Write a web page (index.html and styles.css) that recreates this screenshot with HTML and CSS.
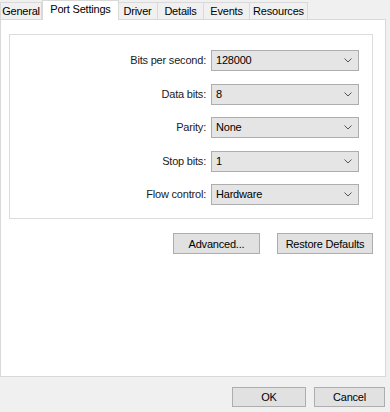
FILE: index.html
```html
<!DOCTYPE html>
<html lang="en">
<head>
<meta charset="UTF-8" />
<title>Port Settings</title>
<link rel="stylesheet" href="styles.css">
</head>
<body>

<div class="tabs">
  <div class="tab t-general">General</div>
  <div class="tab active t-port">Port Settings</div>
  <div class="tab t-driver">Driver</div>
  <div class="tab t-details">Details</div>
  <div class="tab t-events">Events</div>
  <div class="tab t-resources">Resources</div>
</div>

<div class="panel">
  <div class="group">
    <label>Bits per second:</label>
    <div class="combo">128000<svg viewBox="0 0 8 5"><path d="M0.5 0.5 L4 4 L7.5 0.5" /></svg></div>
    <label>Data bits:</label>
    <div class="combo">8<svg viewBox="0 0 8 5"><path d="M0.5 0.5 L4 4 L7.5 0.5" /></svg></div>
    <label>Parity:</label>
    <div class="combo">None<svg viewBox="0 0 8 5"><path d="M0.5 0.5 L4 4 L7.5 0.5" /></svg></div>
    <label>Stop bits:</label>
    <div class="combo">1<svg viewBox="0 0 8 5"><path d="M0.5 0.5 L4 4 L7.5 0.5" /></svg></div>
    <label>Flow control:</label>
    <div class="combo">Hardware<svg viewBox="0 0 8 5"><path d="M0.5 0.5 L4 4 L7.5 0.5" /></svg></div>
  </div>
  <div class="panel-buttons">
    <button class="btn advanced">Advanced...</button>
    <button class="btn restore">Restore Defaults</button>
  </div>
</div>

<div class="footer">
  <button class="btn ok">OK</button>
  <button class="btn cancel">Cancel</button>
</div>

</body>
</html>
```

FILE: styles.css
```css
body {
  margin: 0;
  background: #f0f0f0;
  font-family: "Liberation Sans", Arial, sans-serif;
  font-size: 11px;
  letter-spacing: -0.2px;
  color: #000;
  width: 390px;
  height: 412px;
  overflow: hidden;
}
.tabs {
  display: flex;
  height: 19px;
  align-items: flex-end;
}
.tab {
  height: 17px;
  line-height: 16px;
  text-align: center;
  border: 1px solid #d9d9d9;
  border-bottom: none;
  margin-left: -1px;
  box-sizing: border-box;
  background: #f0f0f0;
  white-space: nowrap;
}
.t-general { width: 42px; margin-left: 0; }
.t-port { width: 77px; }
.t-driver { width: 41px; }
.t-details { width: 47px; }
.t-events { width: 47px; }
.t-resources { width: 59px; }
.tab.active {
  height: 20px;
  line-height: 17px;
  background: #fff;
  position: relative;
  top: 1px;
  margin-left: 0;
  margin-right: -1px;
  z-index: 1;
}
.panel {
  width: 386px;
  height: 358px;
  box-sizing: border-box;
  background: #fff;
  border: 1px solid #d9d9d9;
  padding: 14px 0 0 8px;
}
.group {
  width: 364px;
  height: 185px;
  box-sizing: border-box;
  border: 1px solid #dcdcdc;
  padding: 15px 13px 0 0;
  display: grid;
  grid-template-columns: 1fr 148px;
  column-gap: 5px;
  row-gap: 12.5px;
  align-content: start;
}
.group label {
  text-align: right;
  line-height: 21px;
  color: #1a1a1a;
}
.combo {
  height: 21px;
  box-sizing: border-box;
  border: 1px solid #adadad;
  background: #e5e5e5;
  padding: 0 0 0 4px;
  line-height: 19px;
  display: flex;
  justify-content: space-between;
  align-items: center;
}
.combo svg {
  width: 8px;
  height: 5px;
  margin-right: 6px;
  fill: none;
  stroke: #555;
  stroke-width: 1;
}
.panel-buttons {
  display: flex;
  justify-content: flex-end;
  gap: 17px;
  width: 364px;
  margin-top: 14px;
}
.btn {
  font-family: inherit;
  font-size: inherit;
  letter-spacing: inherit;
  color: #000;
  height: 21px;
  padding: 0;
  background: #e1e1e1;
  border: 1px solid #adadad;
  box-sizing: border-box;
}
.advanced {
  width: 87px;
}
.restore {
  width: 96px;
}
.footer {
  display: flex;
  justify-content: flex-end;
  gap: 8px;
  padding: 10px 5px 0 0;
}
.ok {
  width: 74px;
  height: 20px;
}
.cancel {
  width: 71px;
  height: 20px;
}
```
